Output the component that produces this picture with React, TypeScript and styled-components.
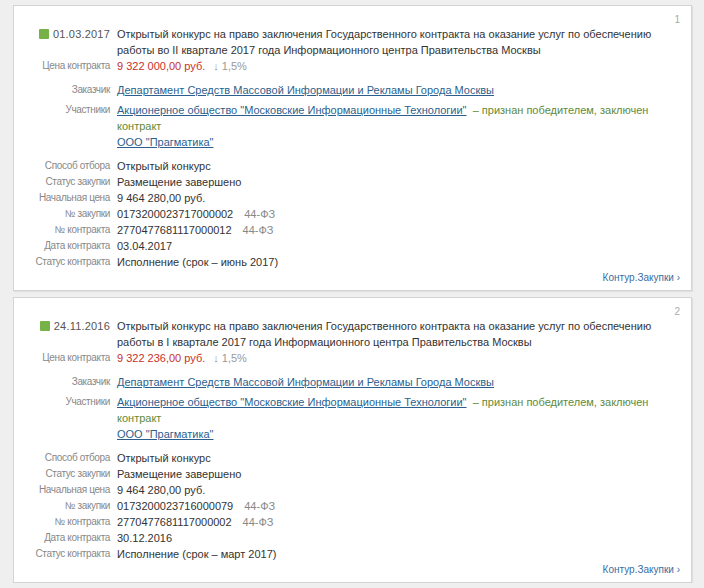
import styled, { createGlobalStyle } from "styled-components";

const GlobalStyle = createGlobalStyle`
  html, body {
    margin: 0;
    padding: 0;
    background: #efefef;
  }
  body {
    font-family: "Liberation Sans", Arial, sans-serif;
  }
`;

const Page = styled.div`
  display: flex;
  flex-direction: column;
  gap: 6px;
  padding: 5px 12px 0 13px;
`;

const Card = styled.div`
  position: relative;
  background: #fff;
  border: 1px solid #d4d4d4;
  box-shadow: 1px 1px 1px rgba(0, 0, 0, 0.06);
  padding: 20px 11px 5px 0;
`;

const Num = styled.div`
  position: absolute;
  top: 8px;
  right: 11px;
  font-size: 10px;
  line-height: 12px;
  color: #aaa;
`;

const Fields = styled.dl<{ $gap: number; $top: number }>`
  display: grid;
  grid-template-columns: 96px 538px;
  column-gap: 7px;
  row-gap: ${(p) => p.$gap}px;
  margin: ${(p) => p.$top}px 0 0;
`;

const Label = styled.dt`
  text-align: right;
  color: #888;
  font-size: 10px;
  letter-spacing: -0.35px;
  line-height: 16px;
  white-space: nowrap;
`;

const DateLabel = styled.dt`
  display: flex;
  align-items: center;
  align-self: start;
  justify-content: flex-end;
  gap: 4px;
  color: #555;
  font-size: 11px;
  letter-spacing: 0.2px;
  line-height: 16px;
`;

const Square = styled.span`
  width: 10px;
  height: 10px;
  background: #77b248;
  border-radius: 1px;
`;

const Value = styled.dd`
  margin: 0;
  color: #333;
  font-size: 11px;
  line-height: 16px;
`;

const Price = styled.span`
  color: #c8302a;
`;

const Drop = styled.span`
  color: #999;
  margin-left: 8px;
`;

const Link = styled.a`
  color: #2c5f8e;
  text-decoration: underline;
`;

const Winner = styled.span`
  color: #5e8a3c;
`;

const Law = styled.span`
  color: #888;
  margin-left: 11px;
`;

const Footer = styled.div`
  display: flex;
  justify-content: flex-end;
  margin-top: 1px;
  font-size: 10px;
  line-height: 14px;
  color: #3a6d9f;
`;

type Contract = {
  n: number;
  date: string;
  title: string;
  price: string;
  purchase: string;
  contract: string;
  signed: string;
  status: string;
};

const data: Contract[] = [
  {
    n: 1,
    date: "01.03.2017",
    title:
      "Открытый конкурс на право заключения Государственного контракта на оказание услуг по обеспечению работы во II квартале 2017 года Информационного центра Правительства Москвы",
    price: "9 322 000,00 руб.",
    purchase: "0173200023717000002",
    contract: "2770477681117000012",
    signed: "03.04.2017",
    status: "Исполнение (срок – июнь 2017)",
  },
  {
    n: 2,
    date: "24.11.2016",
    title:
      "Открытый конкурс на право заключения Государственного контракта на оказание услуг по обеспечению работы в I квартале 2017 года Информационного центра Правительства Москвы",
    price: "9 322 236,00 руб.",
    purchase: "0173200023716000079",
    contract: "2770477681117000002",
    signed: "30.12.2016",
    status: "Исполнение (срок – март 2017)",
  },
];

const ContractCard = ({ c }: { c: Contract }) => (
  <Card>
    <Num>{c.n}</Num>
    <Fields $gap={0} $top={0}>
      <DateLabel>
        <Square />
        {c.date}
      </DateLabel>
      <Value>{c.title}</Value>
      <Label>Цена контракта</Label>
      <Value>
        <Price>{c.price}</Price>
        <Drop>↓ 1,5%</Drop>
      </Value>
    </Fields>
    <Fields $gap={4} $top={8}>
      <Label>Заказчик</Label>
      <Value>
        <Link>Департамент Средств Массовой Информации и Рекламы Города Москвы</Link>
      </Value>
      <Label>Участники</Label>
      <Value>
        <Link>Акционерное общество "Московские Информационные Технологии"</Link>
        <Winner>&nbsp; – признан победителем, заключен контракт</Winner>
        <br />
        <Link>ООО "Прагматика"</Link>
      </Value>
    </Fields>
    <Fields $gap={0} $top={8}>
      <Label>Способ отбора</Label>
      <Value>Открытый конкурс</Value>
      <Label>Статус закупки</Label>
      <Value>Размещение завершено</Value>
      <Label>Начальная цена</Label>
      <Value>9 464 280,00 руб.</Value>
      <Label>№ закупки</Label>
      <Value>
        {c.purchase}
        <Law>44-ФЗ</Law>
      </Value>
      <Label>№ контракта</Label>
      <Value>
        {c.contract}
        <Law>44-ФЗ</Law>
      </Value>
      <Label>Дата контракта</Label>
      <Value>{c.signed}</Value>
      <Label>Статус контракта</Label>
      <Value>{c.status}</Value>
    </Fields>
    <Footer>Контур.Закупки ›</Footer>
  </Card>
);

export default function App() {
  return (
    <>
      <GlobalStyle />
      <Page>
        {data.map((c) => (
          <ContractCard key={c.n} c={c} />
        ))}
      </Page>
    </>
  );
}
